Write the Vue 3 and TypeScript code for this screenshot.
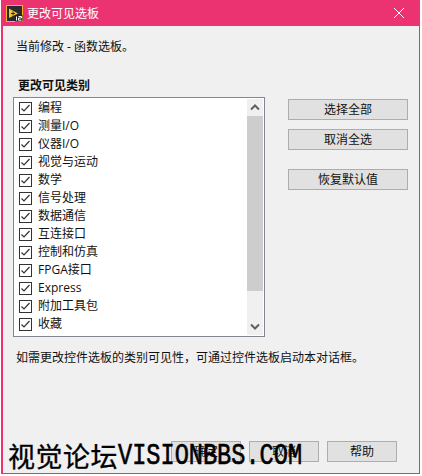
<script setup lang="ts">
const items: string[] = ['编程','测量I/O','仪器I/O','视觉与运动','数学','信号处理','数据通信','互连接口','控制和仿真','FPGA接口','Express','附加工具包','收藏']
</script>

<template>
  <div class="win">
    <header class="title">
      <svg class="logo" width="17" height="17" viewBox="0 0 17 17">
        <rect x="0.5" y="0.5" width="16" height="16" fill="#2a2a30" stroke="#f5b51a"/>
        <path d="M3 3.5 L12 8.5 L3 13 Z" fill="#efc62c"/>
        <path d="M5 8.5h4M7 6.5v4" stroke="#333" stroke-width="1"/>
        <rect x="9" y="10" width="7.5" height="6.5" fill="#222"/>
        <path d="M10.5 11.5v4M12.5 11.5h3v1.5h-3v2.2h3" stroke="#fff" stroke-width="1" fill="none"/>
      </svg>
      <span class="title-text">更改可见选板</span>
      <svg class="close" width="12" height="12" viewBox="0 0 12 12"><path d="M1 1L11 11M11 1L1 11" stroke="#fff" stroke-width="1"/></svg>
    </header>
    <main class="body">
      <p class="current">当前修改 - 函数选板。</p>
      <h2 class="label">更改可见类别</h2>
      <div class="columns">
        <div class="listbox">
          <ul class="list">
            <li v-for="item in items" :key="item" class="row">
              <svg class="check" width="13" height="13" viewBox="0 0 13 13">
                <rect x="0.5" y="0.5" width="12" height="12" fill="#fff" stroke="#333"/>
                <path d="M2.5 6.5L5 9L10.5 3" fill="none" stroke="#333" stroke-width="1.2"/>
              </svg>
              <span>{{ item }}</span>
            </li>
          </ul>
          <div class="scrollbar">
            <svg class="arrow" width="16" height="17" viewBox="0 0 16 17"><path d="M4 10.5L8 6.5L12 10.5" fill="none" stroke="#606060" stroke-width="2"/></svg>
            <div class="thumb"></div>
            <svg class="arrow" width="16" height="17" viewBox="0 0 16 17"><path d="M4 6.5L8 10.5L12 6.5" fill="none" stroke="#606060" stroke-width="2"/></svg>
          </div>
        </div>
        <div class="side">
          <button class="btn">选择全部</button>
          <button class="btn">取消全选</button>
          <button class="btn reset">恢复默认值</button>
        </div>
      </div>
      <p class="note">如需更改控件选板的类别可见性，可通过控件选板启动本对话框。</p>
      <div class="footer">
        <button class="btn small">确定</button>
        <button class="btn small">取消</button>
        <button class="btn small">帮助</button>
      </div>
    </main>
    <div class="watermark"><span class="wm-cjk">视觉论坛</span><span class="wm-latin">VISIONBBS.COM</span></div>
  </div>
</template>

<style>
html, body { margin: 0; background: #fff; }
</style>

<style scoped>
.win {
  position: relative;
  width: 419px;
  height: 474px;
  margin-left: 1px;
  box-sizing: border-box;
  border: 1px solid #ec3372;
  border-left-width: 2px;
  border-top: 0;
  background: #f0f0f0;
  font-family: "Open Sans", "Noto Sans CJK SC", sans-serif;
  font-size: 12px;
  color: #111;
  overflow: hidden;
}
.title {
  height: 26px;
  background: #ec3372;
  display: flex;
  align-items: center;
  padding: 0 14px 0 3px;
  color: #fff;
}
.logo { flex: none; }
.title-text { margin-left: 4px; font-size: 12px; }
.close { margin-left: auto; }
.body { padding: 12px 8px 0 10px; }
.current { margin: 0 0 0 3px; height: 18px; line-height: 18px; }
.label { margin: 21px 0 0 5px; height: 18px; line-height: 18px; font-size: 12px; font-weight: 700; }
.columns { display: flex; margin-top: 2px; }
.listbox {
  flex: none;
  width: 252px;
  height: 240px;
  box-sizing: border-box;
  border: 1px solid #828790;
  background: #fff;
  display: flex;
  justify-content: space-between;
}
.list { list-style: none; margin: 0; padding: 1px 0 0 5px; }
.row { height: 18px; display: flex; align-items: center; gap: 6px; line-height: 18px; }
.check { flex: none; }
.scrollbar { width: 16px; margin: 1px 1px 1px 0; background: #f0f0f0; display: flex; flex-direction: column; }
.arrow { flex: none; }
.thumb { flex: none; height: 175px; background: #cdcdcd; }
.scrollbar .arrow:last-child { margin-top: auto; }
.side { flex: none; display: flex; flex-direction: column; margin: 2px 0 0 23px; }
.btn {
  width: 120px;
  height: 21px;
  padding: 0;
  box-sizing: border-box;
  border: 1px solid #adadad;
  background: #e1e1e1;
  font: inherit;
  color: #111;
  line-height: 18px;
}
.side .btn + .btn { margin-top: 9px; }
.side .btn.reset { margin-top: 19px; }
.note { margin: 12px 0 0 3px; height: 18px; line-height: 18px; }
.footer { display: flex; gap: 8px; margin: 74px 0 0 158px; }
.small { width: 70px; }
.watermark {
  position: absolute;
  left: 5px;
  top: 441px;
  display: flex;
  align-items: center;
  height: 30px;
  color: #000;
  white-space: nowrap;
}
.wm-cjk { font-family: "Noto Sans CJK SC", sans-serif; font-size: 27px; letter-spacing: 0.5px; line-height: 30px; -webkit-text-stroke: 0.3px #000; }
.wm-latin { display: inline-block; font-family: "Liberation Mono", monospace; font-size: 23.6px; line-height: 30px; transform: scaleY(1.25); -webkit-text-stroke: 0.5px #000; }
</style>
